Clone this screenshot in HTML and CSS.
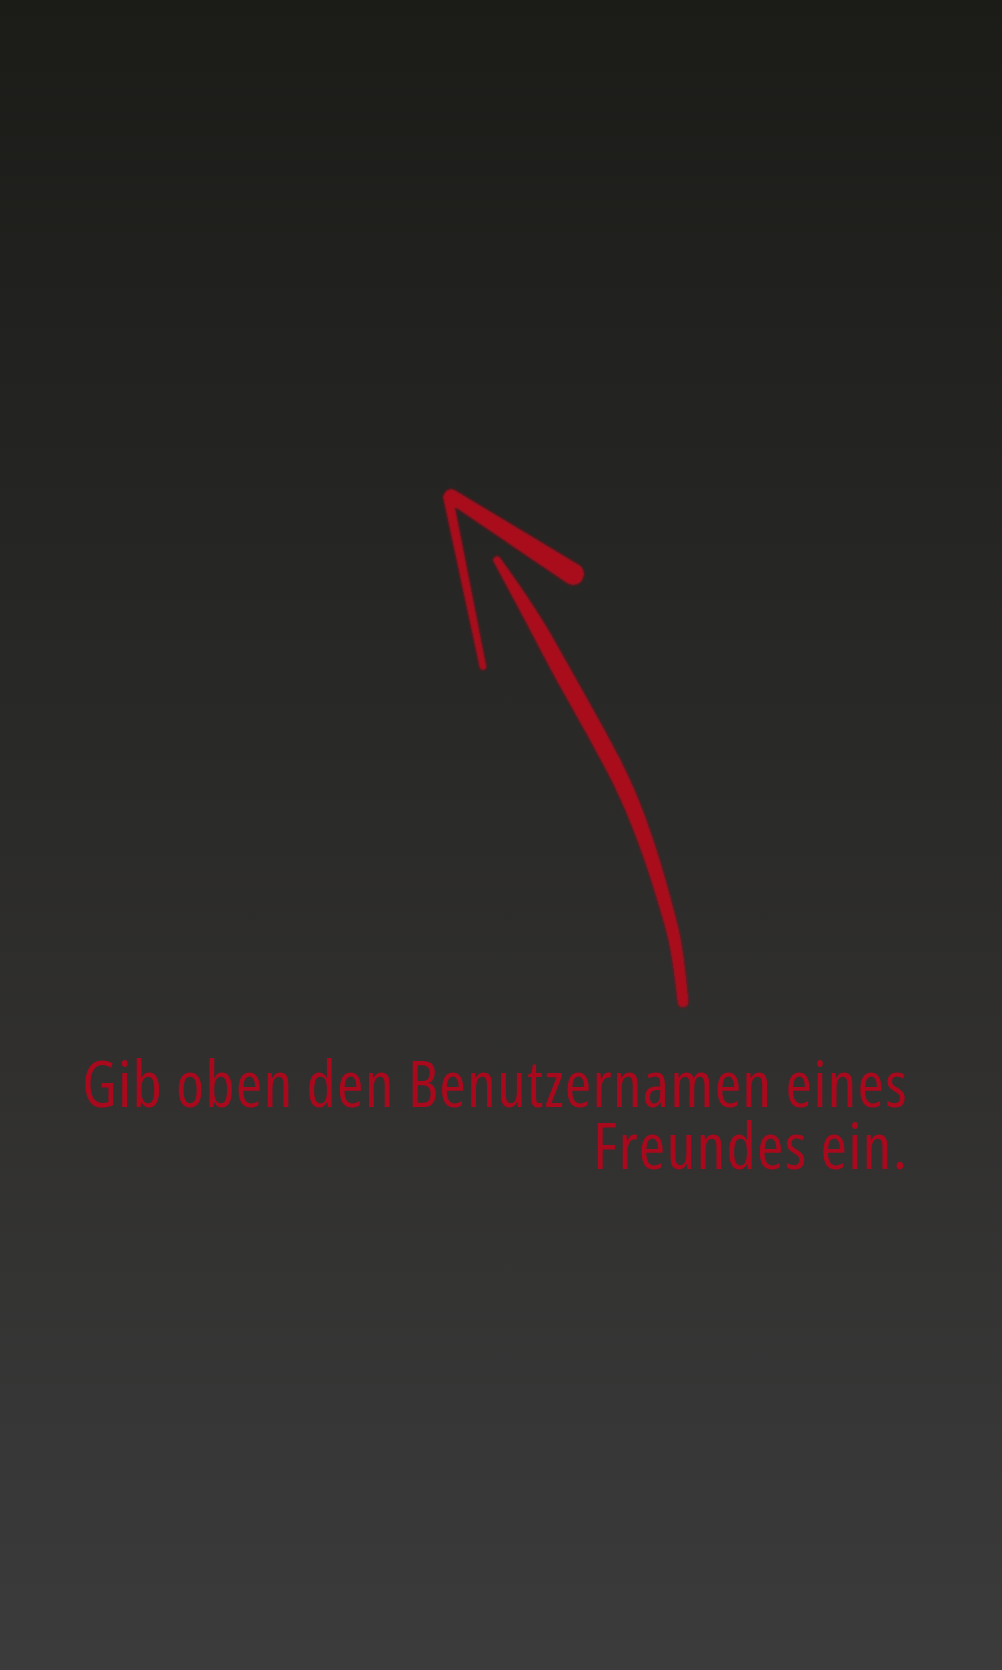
FILE: index.html
```html
<!DOCTYPE html>
<html lang="de">
<head>
<meta charset="utf-8">
<title>Freund hinzufügen</title>
<link rel="stylesheet" href="styles.css">
</head>
<body>
<main class="screen">
  <div class="arrow-area">
    <svg class="arrow" width="1002" height="1040" viewBox="0 0 1002 1040" aria-hidden="true">
      <defs>
        <filter id="soft" x="-5%" y="-5%" width="110%" height="110%">
          <feGaussianBlur stdDeviation="0.8"/>
        </filter>
      </defs>
      <g class="arrow-ink" filter="url(#soft)">
        <path d="M454.8 490.1 L578.9 564.7 A11 11 0 0 1 567.1 583.3 L447.2 501.9 A7 7 0 0 1 454.8 490.1 Z"/>
        <path d="M452.9 496 L486.4 666.3 A3.5 3.5 0 0 1 479.6 667.7 L443.1 498 A5 5 0 0 1 452.9 496 Z"/>
        <path d="M500.4 557.9 Q536.9 609 553.9 639.3 Q570.9 669.6 587.9 699.65 Q604.9 729.7 619.85 758.6 Q634.8 787.5 645.95 818.55 Q657.1 849.6 665.3 878.4 Q673.5 907.2 678.7 929.1 Q683.9 951 688.5 1001.5 A5.5 5.5 0 0 1 677.5 1002.5 Q672.1 953 666.3 931.9 Q660.5 910.8 651.7 882.6 Q642.9 854.4 631.05 824.45 Q619.2 794.5 604.15 766.4 Q589.1 738.3 572.1 708.35 Q555.1 678.4 539.1 647.7 Q523.1 617 493.6 562.1 A4 4 0 0 1 500.4 557.9 Z"/>
      </g>
    </svg>
  </div>
  <p class="hint">Gib oben den Benutzernamen eines<br>Freundes ein.</p>
</main>
</body>
</html>
```

FILE: styles.css
```css
html, body {
  margin: 0;
  padding: 0;
}

body {
  background: #2c2b2a;
}

.screen {
  height: 1670px;
  background: linear-gradient(180deg, #1b1b18 0%, #3c3b3b 100%);
  overflow: hidden;
  display: flex;
  flex-direction: column;
}

.arrow-area {
  height: 1040px;
  flex: none;
}

.arrow {
  display: block;
}

.arrow-ink {
  fill: #a9091d;
}

.hint {
  margin: 12px 94px 0 60px;
  font-family: "Open Sans", "Noto Sans", sans-serif;
  font-stretch: 75%;
  font-weight: 400;
  font-size: 64px;
  letter-spacing: 1.2px;
  line-height: 62px;
  color: #a9091d;
  text-align: right;
  white-space: nowrap;
}
```
